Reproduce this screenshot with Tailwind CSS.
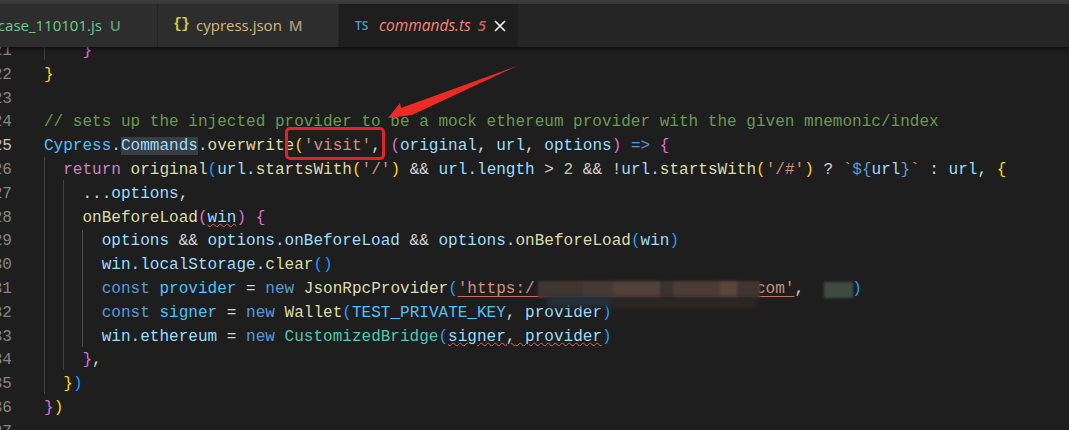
<!DOCTYPE html>
<html lang="en">
<head>
  <meta charset="UTF-8" />
  <title>commands.ts</title>
  <script src="https://cdn.jsdelivr.net/npm/@tailwindcss/browser@4"></script>
</head>
<body class="bg-[#1e1e1e] overflow-hidden">
  <div class="relative w-[1069px] h-[430px] overflow-hidden bg-[#1e1e1e]">

    <!-- tabs -->
    <div class="h-[4px] bg-[#3c3c3c]"></div>
    <div class="flex h-[43px] bg-[#252526] font-['Open_Sans',sans-serif] text-[15px] shadow-[0_2px_4px_rgba(0,0,0,0.5)] relative z-10">
      <div class="w-[158px] shrink-0 flex items-center justify-end gap-[8px] pr-[36px] bg-[#2d2d2d] border-r border-[#252526] text-[#73c991] overflow-hidden whitespace-nowrap">
        <span>case_110101.js</span><span class="text-[#5f9c78] font-semibold">U</span>
      </div>
      <div class="w-[181px] shrink-0 flex items-center pl-[15px] gap-[7px] bg-[#2d2d2d] border-r border-[#252526] text-[#d7ba7d] whitespace-nowrap">
        <span class="font-['Liberation_Mono',monospace] font-bold text-[#cbcb41] text-[15px] tracking-[-1px]">{}</span>
        <span>cypress.json</span><span class="text-[#a8977a] font-semibold">M</span>
      </div>
      <div class="w-[179px] shrink-0 flex items-center pl-[16px] bg-[#1e1e1e] whitespace-nowrap">
        <span class="text-[#519aba] text-[12px] font-semibold w-[21px]">TS</span>
        <span class="italic text-[#f48771] ml-[3px] text-[15.5px]">commands.ts</span>
        <span class="italic text-[#c4605a] font-semibold ml-[7px]">5</span>
        <svg class="ml-[8px]" width="12" height="12" viewBox="0 0 12 12"><path d="M1 1l10 10M11 1L1 11" stroke="#f0f0f0" stroke-width="1.7"/></svg>
      </div>
    </div>

    <!-- editor -->
    <div class="relative h-[383px] font-['Liberation_Mono',monospace] text-[16.05px] leading-[23.8px] text-[#d4d4d4] -mt-[7px] [&>div]:whitespace-pre">
      <div class="flex"><span class="w-[12px] overflow-hidden flex justify-end text-[#858585]">21</span><span class="ml-[32px]">    <span class="text-[#da70d6]">}</span></span></div>
      <div class="flex"><span class="w-[12px] overflow-hidden flex justify-end text-[#858585]">22</span><span class="ml-[32px]"><span class="text-[#ffd700]">}</span></span></div>
      <div class="flex"><span class="w-[12px] overflow-hidden flex justify-end text-[#858585]">23</span></div>
      <div class="flex"><span class="w-[12px] overflow-hidden flex justify-end text-[#858585]">24</span><span class="ml-[32px] text-[#6a9955]">// sets up the injected provider to be a mock ethereum provider with the given mnemonic/index</span></div>
      <div class="flex"><span class="w-[12px] overflow-hidden flex justify-end text-[#c6c6c6]">25</span><span class="ml-[32px] text-[#9cdcfe]"><span class="text-[#4fc1ff]">Cypress</span>.<span class="bg-[#3a3d41]">Commands</span>.<span class="text-[#dcdcaa]">overwrite</span><span class="text-[#ffd700]">(</span><span class="text-[#ce9178]">'visit'</span><span class="text-[#d4d4d4]">,</span> <span class="text-[#da70d6]">(</span>original<span class="text-[#d4d4d4]">,</span> url<span class="text-[#d4d4d4]">,</span> options<span class="text-[#da70d6]">)</span> <span class="text-[#569cd6]">=&gt;</span> <span class="text-[#da70d6]">{</span></span></div>
      <div class="flex"><span class="w-[12px] overflow-hidden flex justify-end text-[#858585]">26</span><span class="ml-[32px] text-[#9cdcfe]">  <span class="text-[#c586c0]">return</span> <span class="text-[#dcdcaa]">original</span><span class="text-[#179fff]">(</span>url.<span class="text-[#dcdcaa]">startsWith</span><span class="text-[#ffd700]">(</span><span class="text-[#ce9178]">'/'</span><span class="text-[#ffd700]">)</span> <span class="text-[#d4d4d4]">&amp;&amp;</span> url.length <span class="text-[#d4d4d4]">&gt;</span> <span class="text-[#b5cea8]">2</span> <span class="text-[#d4d4d4]">&amp;&amp; !</span>url.<span class="text-[#dcdcaa]">startsWith</span><span class="text-[#ffd700]">(</span><span class="text-[#ce9178]">'/#'</span><span class="text-[#ffd700]">)</span> <span class="text-[#d4d4d4]">?</span> <span class="text-[#ce9178]">`</span><span class="text-[#569cd6]">${</span>url<span class="text-[#569cd6]">}</span><span class="text-[#ce9178]">`</span> <span class="text-[#d4d4d4]">:</span> url<span class="text-[#d4d4d4]">,</span> <span class="text-[#ffd700]">{</span></span></div>
      <div class="flex"><span class="w-[12px] overflow-hidden flex justify-end text-[#858585]">27</span><span class="ml-[32px] text-[#9cdcfe]">    <span class="text-[#d4d4d4]">...</span>options<span class="text-[#d4d4d4]">,</span></span></div>
      <div class="flex"><span class="w-[12px] overflow-hidden flex justify-end text-[#858585]">28</span><span class="ml-[32px] text-[#9cdcfe]">    <span class="text-[#dcdcaa]">onBeforeLoad</span><span class="text-[#da70d6]">(</span><span class="underline decoration-wavy decoration-[#e0605a] decoration-1">win</span><span class="text-[#da70d6]">)</span> <span class="text-[#da70d6]">{</span></span></div>
      <div class="flex"><span class="w-[12px] overflow-hidden flex justify-end text-[#858585]">29</span><span class="ml-[32px] text-[#9cdcfe]">      options <span class="text-[#d4d4d4]">&amp;&amp;</span> options.onBeforeLoad <span class="text-[#d4d4d4]">&amp;&amp;</span> options.<span class="text-[#dcdcaa]">onBeforeLoad</span><span class="text-[#179fff]">(</span>win<span class="text-[#179fff]">)</span></span></div>
      <div class="flex"><span class="w-[12px] overflow-hidden flex justify-end text-[#858585]">30</span><span class="ml-[32px] text-[#9cdcfe]">      win.localStorage.<span class="text-[#dcdcaa]">clear</span><span class="text-[#179fff]">()</span></span></div>
      <div class="flex"><span class="w-[12px] overflow-hidden flex justify-end text-[#858585]">31</span><span class="ml-[32px] text-[#4fc1ff]">      <span class="text-[#569cd6]">const</span> provider <span class="text-[#d4d4d4]">=</span> <span class="text-[#569cd6]">new</span> <span class="text-[#dcdcaa]">JsonRpcProvider</span><span class="text-[#179fff]">(</span><span class="text-[#ce9178] underline decoration-[#c9705a] decoration-1 underline-offset-[3px]">'https:/                       com'</span><span class="text-[#d4d4d4]">,</span>     <span class="text-[#179fff]">)</span></span></div>
      <div class="flex"><span class="w-[12px] overflow-hidden flex justify-end text-[#858585]">32</span><span class="ml-[32px] text-[#4fc1ff]">      <span class="text-[#569cd6]">const</span> signer <span class="text-[#d4d4d4]">=</span> <span class="text-[#569cd6]">new</span> <span class="text-[#dcdcaa]">Wallet</span><span class="text-[#179fff]">(</span>TEST_PRIVATE_KEY<span class="text-[#d4d4d4]">,</span> <span class="text-[#9cdcfe]">provider</span><span class="text-[#179fff]">)</span></span></div>
      <div class="flex"><span class="w-[12px] overflow-hidden flex justify-end text-[#858585]">33</span><span class="ml-[32px] text-[#9cdcfe]">      win.ethereum <span class="text-[#d4d4d4]">=</span> <span class="text-[#569cd6]">new</span> <span class="text-[#4ec9b0]">CustomizedBridge</span><span class="text-[#179fff]">(</span><span class="underline decoration-wavy decoration-[#e0605a] decoration-1">signer<span class="text-[#d4d4d4]">,</span> provider</span><span class="text-[#179fff]">)</span></span></div>
      <div class="flex"><span class="w-[12px] overflow-hidden flex justify-end text-[#858585]">34</span><span class="ml-[32px]">    <span class="text-[#da70d6]">}</span>,</span></div>
      <div class="flex"><span class="w-[12px] overflow-hidden flex justify-end text-[#858585]">35</span><span class="ml-[32px]">  <span class="text-[#ffd700]">}</span><span class="text-[#179fff]">)</span></span></div>
      <div class="flex"><span class="w-[12px] overflow-hidden flex justify-end text-[#858585]">36</span><span class="ml-[32px]"><span class="text-[#da70d6]">}</span><span class="text-[#ffd700]">)</span></span></div>
      <div class="flex"><span class="w-[12px] overflow-hidden flex justify-end text-[#858585]">37</span></div>

      <!-- indent guides -->
      <div class="absolute left-[44px] top-0 h-[20px] w-px bg-[#404040]"></div>
      <div class="absolute left-[44px] top-[117px] h-[237px] w-px bg-[#404040]"></div>
      <div class="absolute left-[63px] top-[140px] h-[190px] w-px bg-[#404040]"></div>
      <div class="absolute left-[82px] top-[190px] h-[117px] w-px bg-[#505050]"></div>

      <!-- redacted url -->
      <div class="absolute left-[538px] top-[241px] w-[222px] h-[17px] flex blur-[1px]">
        <div class="w-[45px] bg-[#3f3531]"></div><div class="w-[30px] bg-[#453a35]"></div><div class="w-[47px] bg-[#52403a]"></div><div class="w-[13px] bg-[#3a322f]"></div><div class="w-[47px] bg-[#4c3c36]"></div><div class="w-[17px] bg-[#5a463c]"></div><div class="w-[23px] bg-[#42352f]"></div>
      </div>
      <div class="absolute left-[547px] top-[257px] w-[66px] h-[10px] bg-[#25303a] blur-[2px]"></div>
      <div class="absolute left-[613px] top-[257px] w-[144px] h-[12px] bg-[#2a2623] blur-[2px]"></div>
      <div class="absolute left-[824px] top-[242px] w-[29px] h-[16px] bg-[#3f4a45] blur-[1px]"></div>
    </div>

    <!-- annotation -->
    <div class="absolute left-[285px] top-[127px] w-[100px] h-[33px] border-[3px] border-[#e8202a] rounded-[5px]"></div>
    <svg class="absolute left-0 top-0" width="1069" height="430" viewBox="0 0 1069 430"><polygon points="517,66 401,108 400,103 388,118 412,115" fill="#ee2a24"/></svg>
  </div>
</body>
</html>
